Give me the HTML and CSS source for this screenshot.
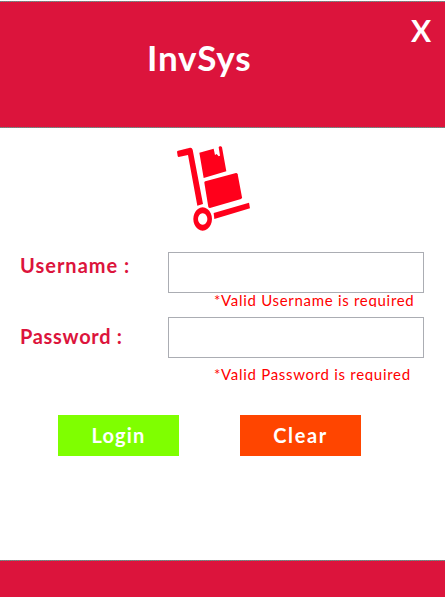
FILE: index.html
```
<!DOCTYPE html>
<html lang="en">
<head>
<meta charset="utf-8">
<title>InvSys</title>
<link rel="stylesheet" href="styles.css">
</head>
<body>
<header class="top">
  <h1 class="title">InvSys</h1>
  <button class="close">X</button>
</header>
<main class="body">
  <svg class="logo" width="100" height="100" viewBox="0 0 300 300" fill="#ff001b">
    <path d="M36 41 Q36 39 39 38 L75 29 Q81 28 83 35 L114 198 L97 203 L69 51 L41 57 Q39 57 38 54 Z"/>
    <path d="M103 44 L146 32 L150 51 L155 48 L161 55 L165 53 L161 28 Q162 24 168 25 L171 28 L184 100 L116 120 Z"/>
    <path d="M118 134 Q118 131 121 130 L213 105 Q217 105 218 109 L231 178 Q231 182 228 183 L135 210 Q131 210 130 207 Z"/>
    <path d="M146 225 L252 194 L255 211 L148 243 Z"/>
    <path fill-rule="evenodd" d="M113 208 A28 35 0 1 1 112.900 208 Z M113 226 A14 17 0 1 0 113.100 226 Z"/>
  </svg>
  <form class="form">
    <label class="label" for="user">Username :</label>
    <input class="field" id="user" type="text">
    <p class="error">*Valid Username is required</p>
    <label class="label second" for="pass">Password :</label>
    <input class="field" id="pass" type="password">
    <p class="error last">*Valid Password is required</p>
  </form>
  <div class="actions">
    <button class="btn login">Login</button>
    <button class="btn clear">Clear</button>
  </div>
</main>
<footer class="bottom"></footer>
</body>
</html>
```
FILE: styles.css
```
* { box-sizing: border-box; margin: 0; padding: 0; }
body {
  width: 445px; height: 597px; padding-top: 1px; overflow: hidden;
  display: flex; flex-direction: column;
  background: #fff; font-family: "Century Gothic", Lato, sans-serif;
}
button { border: 0; font-family: inherit; font-weight: 700; color: #fff; }
.top, .bottom {
  --dots: repeating-linear-gradient(90deg, #4a9c86 0 1px, #c8506c 1px 2px);
  background: var(--dots) top / 100% 1px no-repeat, #dc143c;
}
.top {
  height: 127px; flex: none; display: flex; justify-content: space-between;
  background: var(--dots) top / 100% 1px no-repeat, var(--dots) bottom / 100% 1px no-repeat, #dc143c;
}
.title {
  margin: 33px 0 0 147px; font-size: 35px; line-height: 46px;
  letter-spacing: 0.8px; color: #fff; white-space: nowrap;
}
.close { height: 36px; margin: 11px 14px 0 0; background: none; font-size: 30px; line-height: 36px; }
.body { height: 432px; flex: none; }
.logo { display: block; margin: 10px 0 0 165px; }
.form {
  display: grid; grid-template-columns: 148px 256px; margin: 14px 0 0 20px;
  grid-template-rows: 41px 24px 41px 34px;
}
.label {
  color: #dc143c; font-size: 20px; font-weight: 700; line-height: 26px;
  letter-spacing: 1px; white-space: nowrap;
}
.second { padding-top: 6px; letter-spacing: 0.7px; }
.field { width: 256px; height: 41px; border: 1px solid #abadb3; background: #fff; outline: 0; }
.error {
  grid-column: 2; height: 14px; margin-left: 46px; overflow: hidden;
  color: #f00; font-size: 15px; line-height: 15px; letter-spacing: 0.7px; white-space: nowrap;
}
.last { margin-top: 9px; }
.actions { display: flex; gap: 61px; margin: 23px 0 0 58px; }
.btn { width: 121px; height: 41px; font-size: 20px; line-height: 41px; letter-spacing: 1.2px; }
.login { background: #7fff00; }
.clear { background: #ff4500; letter-spacing: 1.6px; }
.bottom { height: 37px; flex: none; }
```
